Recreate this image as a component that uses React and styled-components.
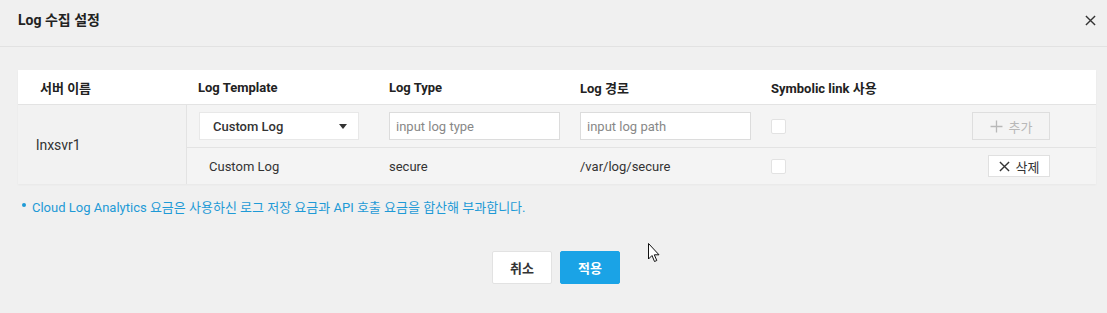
import React from "react";
import styled, { createGlobalStyle } from "styled-components";

const Global = createGlobalStyle`
  html, body { margin: 0; padding: 0; }
  body {
    width: 1107px;
    height: 313px;
    overflow: hidden;
    background: #f0f0f0;
    font-family: Roboto, "Noto Sans CJK KR", sans-serif;
    color: #333;
  }
  * { box-sizing: border-box; }
`;

const Modal = styled.div`
  position: relative;
  width: 1107px;
  height: 313px;
  background: #f0f0f0;
`;

const Header = styled.div`
  height: 47px;
  display: flex;
  align-items: flex-start;
  justify-content: space-between;
  padding: 10px 7px 0 18px;
  border-bottom: 1px solid #e2e2e2;
`;

const Title = styled.h1`
  margin: 0;
  font-size: 14px;
  font-weight: 700;
  color: #222;
  line-height: 21px;
`;

const Close = styled.button`
  border: 0;
  background: none;
  padding: 0;
  width: 20px;
  height: 20px;
  display: flex;
  align-items: center;
  justify-content: center;
  cursor: pointer;
`;

const Body = styled.div`
  padding: 23px 11px 0 18px;
`;

const Table = styled.div`
  background: #f4f4f4;
  box-shadow: 0 1px 2px rgba(0, 0, 0, 0.04);
`;

const HeadRow = styled.div`
  display: grid;
  grid-template-columns: 169px 191px 191px 191px 191px 1fr;
  height: 35px;
  align-items: center;
  background: #fff;
  border-bottom: 1px solid #e3e3e3;
`;

const HeadCell = styled.div`
  font-size: 13px;
  font-weight: 700;
  color: #222;
  padding-left: ${(p) => p.$pad || 11}px;
`;

const Rows = styled.div`
  display: grid;
  grid-template-columns: 169px 1fr;
`;

const Server = styled.div`
  display: flex;
  align-items: center;
  padding-left: 18px;
  font-size: 14px;
  border-right: 1px solid #e3e3e3;
  background: #f2f2f2;
`;

const Row = styled.div`
  display: grid;
  grid-template-columns: 191px 191px 191px 191px 1fr;
  align-items: center;
  height: ${(p) => p.$h}px;
  border-bottom: ${(p) => (p.$last ? "none" : "1px solid #e3e3e3")};
`;

const Cell = styled.div`
  padding-left: ${(p) => p.$pad || 11}px;
  font-size: 13px;
  color: #333;
  display: flex;
  align-items: center;
  justify-content: ${(p) => (p.$end ? "flex-end" : "flex-start")};
  padding-right: ${(p) => (p.$end ? 46 : 0)}px;
`;

const Select = styled.div`
  width: 160px;
  height: 28px;
  background: #fff;
  border: 1px solid #e8e8e8;
  display: flex;
  align-items: center;
  justify-content: space-between;
  padding: 0 11px 0 13px;
  font-size: 13px;
  font-weight: 500;
  color: #333;
`;

const Caret = styled.span`
  width: 0;
  height: 0;
  border-left: 4px solid transparent;
  border-right: 4px solid transparent;
  border-top: 5px solid #333;
`;

const Input = styled.input`
  width: 171px;
  height: 28px;
  border: 1px solid #dcdcdc;
  background: #fff;
  padding: 0 6px;
  font-family: inherit;
  font-size: 13px;
  color: #333;
  outline: none;
  &::placeholder { color: #888; }
`;

const Check = styled.span`
  width: 15px;
  height: 15px;
  background: #fff;
  border: 1px solid #e2e2e2;
  border-radius: 2px;
`;

const SmallButton = styled.button`
  display: flex;
  align-items: center;
  justify-content: center;
  gap: 6px;
  width: ${(p) => p.$w}px;
  height: ${(p) => p.$h}px;
  border: 1px solid ${(p) => (p.$disabled ? "#dedede" : "#e0e0e0")};
  background: ${(p) => (p.$disabled ? "#f4f4f4" : "#fff")};
  color: ${(p) => (p.$disabled ? "#b8b8b8" : "#333")};
  font-family: inherit;
  font-size: 13px;
  padding: 0;
  cursor: pointer;
`;

const Note = styled.p`
  margin: 13px 0 0 4px;
  font-size: 13px;
  color: #1e9ad6;
  display: flex;
  align-items: center;
  gap: 6px;
`;

const Dot = styled.span`
  width: 4px;
  height: 4px;
  border-radius: 50%;
  background: #1e9ad6;
  margin-top: -4px;
`;

const Footer = styled.div`
  display: flex;
  justify-content: center;
  gap: 8px;
  margin-top: 35px;
  padding-right: 2px;
`;

const FootButton = styled.button`
  width: 60px;
  height: 33px;
  border: 1px solid ${(p) => (p.$primary ? "#1aa3e6" : "#e2e2e2")};
  background: ${(p) => (p.$primary ? "#1aa3e6" : "#fff")};
  color: ${(p) => (p.$primary ? "#fff" : "#333")};
  font-family: inherit;
  font-size: 13px;
  font-weight: 700;
  border-radius: 2px;
  cursor: pointer;
`;

const Pointer = styled.svg`
  position: absolute;
  left: 648px;
  top: 243px;
`;

const XIcon = ({ size = 11, w = 1.4, color = "#333" }) => (
  <svg width={size} height={size} viewBox="0 0 12 12">
    <path d="M1 1L11 11M11 1L1 11" stroke={color} strokeWidth={w} fill="none" />
  </svg>
);

const PlusIcon = () => (
  <svg width="13" height="13" viewBox="0 0 12 12">
    <path d="M6 0.5V11.5M0.5 6H11.5" stroke="#b8b8b8" strokeWidth="1.2" fill="none" />
  </svg>
);

export default function App() {
  return (
    <Modal>
      <Global />
      <Header>
        <Title>Log 수집 설정</Title>
        <Close aria-label="close">
          <XIcon size={11} w={1.5} color="#333" />
        </Close>
      </Header>
      <Body>
        <Table>
          <HeadRow>
            <HeadCell $pad={22}>서버 이름</HeadCell>
            <HeadCell>Log Template</HeadCell>
            <HeadCell>Log Type</HeadCell>
            <HeadCell>Log 경로</HeadCell>
            <HeadCell>Symbolic link 사용</HeadCell>
            <HeadCell />
          </HeadRow>
          <Rows>
            <Server>lnxsvr1</Server>
            <div>
              <Row $h={43}>
                <Cell $pad={12}>
                  <Select>
                    Custom Log
                    <Caret />
                  </Select>
                </Cell>
                <Cell>
                  <Input placeholder="input log type" />
                </Cell>
                <Cell>
                  <Input placeholder="input log path" />
                </Cell>
                <Cell>
                  <Check />
                </Cell>
                <Cell $end>
                  <SmallButton $disabled $w={78} $h={28}>
                    <PlusIcon /> 추가
                  </SmallButton>
                </Cell>
              </Row>
              <Row $h={36} $last>
                <Cell $pad={22}>Custom Log</Cell>
                <Cell>secure</Cell>
                <Cell>/var/log/secure</Cell>
                <Cell>
                  <Check />
                </Cell>
                <Cell $end>
                  <SmallButton $w={62} $h={22}>
                    <XIcon size={11} w={1.5} color="#333" /> 삭제
                  </SmallButton>
                </Cell>
              </Row>
            </div>
          </Rows>
        </Table>
        <Note>
          <Dot />
          Cloud Log Analytics 요금은 사용하신 로그 저장 요금과 API 호출 요금을 합산해 부과합니다.
        </Note>
        <Footer>
          <FootButton>취소</FootButton>
          <FootButton $primary>적용</FootButton>
        </Footer>
      </Body>
      <Pointer width="12" height="20" viewBox="0 0 12 20">
        <path d="M0.5 0.5V16L4 12.5L6.5 18.5L8.8 17.5L6.3 11.8H11L0.5 0.5Z" fill="#fff" stroke="#111" strokeWidth="1" />
      </Pointer>
    </Modal>
  );
}
